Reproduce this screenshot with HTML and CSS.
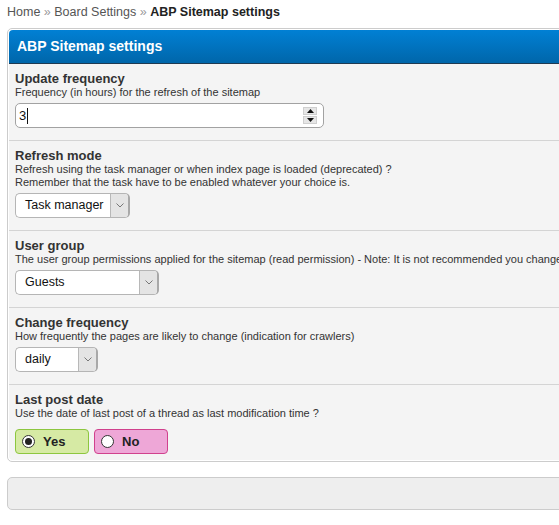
FILE: index.html
```html
<!DOCTYPE html>
<html>
<head>
<meta charset="utf-8">
<link rel="stylesheet" href="styles.css">
</head>
<body>
<div class="page">
  <div class="breadcrumb"><a>Home</a> <span class="sep">»</span> <a>Board Settings</a> <span class="sep">»</span> <span class="current">ABP Sitemap settings</span></div>

  <div class="panel">
    <div class="panel-head">ABP Sitemap settings</div>

    <div class="row">
      <div class="label">Update frequency</div>
      <div class="desc">Frequency (in hours) for the refresh of the sitemap</div>
      <div class="numbox">
        <span class="numval">3<span class="caret"></span></span>
        <span class="spinner">
          <span class="spin up"><svg width="7" height="4" viewBox="0 0 7 4"><path d="M0 4 L3.5 0 L7 4 Z" fill="#111"/></svg></span>
          <span class="spin down"><svg width="7" height="4" viewBox="0 0 7 4"><path d="M0 0 L3.5 4 L7 0 Z" fill="#111"/></svg></span>
        </span>
      </div>
    </div>

    <div class="row">
      <div class="label">Refresh mode</div>
      <div class="desc">Refresh using the task manager or when index page is loaded (deprecated) ?<br>Remember that the task have to be enabled whatever your choice is.</div>
      <div class="select sel-task">
        <span class="selval">Task manager</span>
        <span class="arrow"><svg width="8" height="5" viewBox="0 0 8 5"><path d="M0.5 0.5 L4 4 L7.5 0.5" fill="none" stroke="#777" stroke-width="1"/></svg></span>
      </div>
    </div>

    <div class="row">
      <div class="label">User group</div>
      <div class="desc nowrap">The user group permissions applied for the sitemap (read permission) - Note: It is not recommended you change the user group</div>
      <div class="select sel-group">
        <span class="selval">Guests</span>
        <span class="arrow"><svg width="8" height="5" viewBox="0 0 8 5"><path d="M0.5 0.5 L4 4 L7.5 0.5" fill="none" stroke="#777" stroke-width="1"/></svg></span>
      </div>
    </div>

    <div class="row">
      <div class="label">Change frequency</div>
      <div class="desc">How frequently the pages are likely to change (indication for crawlers)</div>
      <div class="select sel-freq">
        <span class="selval">daily</span>
        <span class="arrow"><svg width="8" height="5" viewBox="0 0 8 5"><path d="M0.5 0.5 L4 4 L7.5 0.5" fill="none" stroke="#777" stroke-width="1"/></svg></span>
      </div>
    </div>

    <div class="row last">
      <div class="label">Last post date</div>
      <div class="desc">Use the date of last post of a thread as last modification time ?</div>
      <div class="radios">
        <label class="radio yes"><span class="circle checked"><span class="dot"></span></span>Yes</label>
        <label class="radio no"><span class="circle"></span>No</label>
      </div>
    </div>
  </div>

  <div class="footer-box"></div>
</div>
</body>
</html>
```

FILE: styles.css
```css
html, body {
  margin: 0;
  padding: 0;
  overflow: hidden;
  background: #fff;
}

.page {
  width: 1000px;
  padding: 5px 7px 0 7px;
  font-family: "Liberation Sans", Arial, sans-serif;
  color: #333;
}

.breadcrumb {
  font-size: 12.5px;
  line-height: 15px;
  color: #555;
}

.breadcrumb a {
  color: #555;
}

.breadcrumb .sep {
  color: #999;
}

.breadcrumb .current {
  font-weight: bold;
  color: #222;
}

.panel {
  margin-top: 8px;
  border: 1px solid #ccc;
  border-radius: 5px;
  padding: 1px;
  background: #fff;
}

.panel-head {
  height: 33px;
  line-height: 33px;
  padding-left: 8px;
  background: linear-gradient(to bottom, #0180d4, #0066aa);
  border-bottom: 1px solid #1f3a52;
  border-radius: 4px 4px 0 0;
  color: #fff;
  font-weight: bold;
  font-size: 14px;
}

.row {
  background: #f4f4f4;
  padding: 7px 6px 12px 6px;
  border-bottom: 1px solid #d4d4d4;
}

.row.last {
  border-bottom: none;
  padding-bottom: 6px;
  border-radius: 0 0 4px 4px;
}

.label {
  font-weight: bold;
  font-size: 13px;
  line-height: 15px;
  color: #333;
}

.desc {
  font-size: 11px;
  line-height: 13px;
  color: #333;
}

.desc.nowrap {
  white-space: nowrap;
}

.numbox {
  margin-top: 4px;
  width: 307px;
  height: 23px;
  border: 1px solid #a2a2a2;
  border-radius: 5px;
  background: #fff;
  display: flex;
  align-items: center;
  justify-content: space-between;
  box-sizing: content-box;
}

.numval {
  font-size: 13px;
  color: #111;
  padding-left: 3px;
  display: flex;
  align-items: center;
}

.caret {
  display: inline-block;
  width: 1px;
  height: 16px;
  background: #111;
  margin-left: 1px;
}

.spinner {
  display: flex;
  flex-direction: column;
  margin-right: 6px;
  gap: 1px;
}

.spin {
  width: 12px;
  height: 6px;
  background: #e6e6e6;
  border: 1px solid #cfcfcf;
  display: flex;
  align-items: center;
  justify-content: center;
}

.select {
  margin-top: 4px;
  height: 23px;
  border: 1px solid #b5b5b5;
  border-right: 2px solid #a8a8a8;
  border-radius: 5px;
  background: #fff;
  display: flex;
  align-items: stretch;
  overflow: hidden;
  font-size: 12.5px;
  color: #111;
}

.sel-task { width: 112px; }
.sel-group { width: 141px; }
.sel-freq { width: 80px; }

.selval {
  flex: 1;
  padding-left: 9px;
  line-height: 23px;
  white-space: nowrap;
}

.arrow {
  width: 17px;
  background: #e4e4e4;
  border-left: 1px solid #b8b8b8;
  display: flex;
  align-items: center;
  justify-content: center;
}

.radios {
  margin-top: 9px;
  display: flex;
  gap: 5px;
}

.radio {
  width: 72px;
  height: 23px;
  border-radius: 4px;
  display: flex;
  align-items: center;
  font-weight: bold;
  font-size: 13px;
  color: #222;
  box-sizing: content-box;
}

.radio.yes {
  background: #d6eaa4;
  border: 1px solid #8dc63f;
}

.radio.no {
  background: #eea7d7;
  border: 1px solid #d0418d;
}

.circle {
  width: 11px;
  height: 11px;
  border: 1px solid #333;
  border-radius: 50%;
  background: #fff;
  margin-left: 6px;
  margin-right: 8px;
  display: flex;
  align-items: center;
  justify-content: center;
}

.dot {
  width: 7px;
  height: 7px;
  border-radius: 50%;
  background: #222;
}

.footer-box {
  margin-top: 15px;
  height: 31px;
  background: #eee;
  border: 1px solid #ccc;
  border-radius: 5px;
}
```
